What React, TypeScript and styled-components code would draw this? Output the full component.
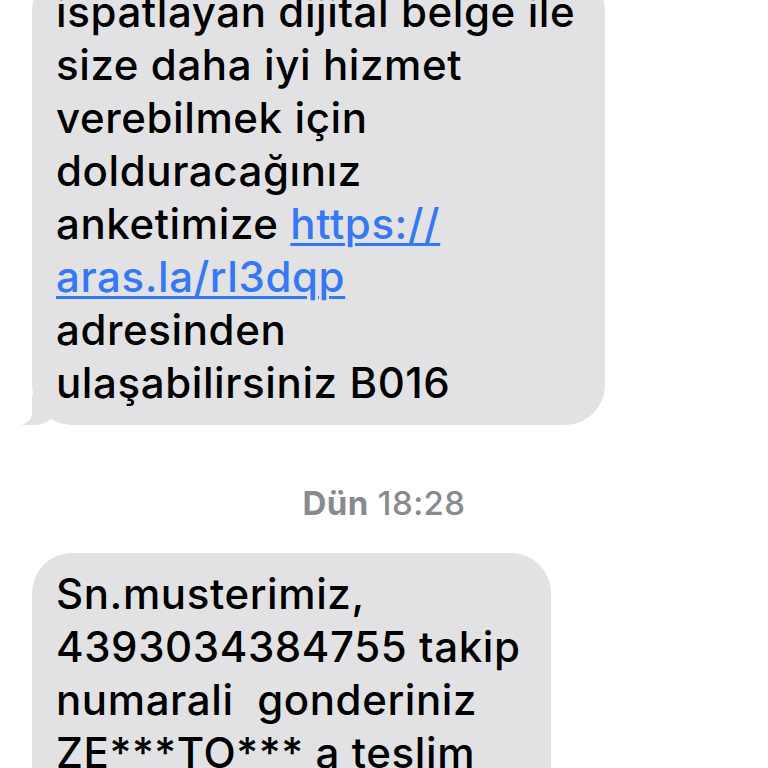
import React from "react";
import styled, { createGlobalStyle } from "styled-components";

const Global = createGlobalStyle`
  html, body { margin: 0; padding: 0; background: #ffffff; }
  body { width: 768px; height: 768px; overflow: hidden; }
  #root { width: 768px; height: 768px; overflow: hidden; }
`;

const Thread = styled.div`
  display: flex;
  flex-direction: column;
  align-items: flex-start;
  padding: 0 32px;
  font-family: Inter, "Noto Sans", "Liberation Sans", sans-serif;
`;

const Bubble = styled.div<{ $tail?: boolean; $offset?: number }>`
  position: relative;
  background: #e2e2e4;
  color: #000000;
  border-radius: 40px;
  padding: 14px 30px 16px 24px;
  font-size: 42px;
  font-weight: 500;
  line-height: 53px;
  letter-spacing: 0.6px;
  margin-top: ${(p) => p.$offset ?? 0}px;
  ${(p) =>
    p.$tail &&
    `
    &::before {
      content: "";
      position: absolute;
      left: -10px;
      bottom: 0;
      width: 34px;
      height: 30px;
      background: #e2e2e4;
      border-bottom-right-radius: 22px 16px;
    }
    &::after {
      content: "";
      position: absolute;
      left: -26px;
      bottom: 0;
      width: 26px;
      height: 30px;
      background: #ffffff;
      border-bottom-right-radius: 14px 12px;
    }
  `}
`;

const Line = styled.span`
  display: block;
  white-space: nowrap;
  position: relative;
  z-index: 1;
`;

const Link = styled.span`
  color: #3478f6;
  text-decoration: underline;
  text-decoration-thickness: 3px;
  text-underline-offset: 4px;
`;

const Stamp = styled.div`
  align-self: center;
  margin: 58px 0 30px;
  color: #8a8a8e;
  font-size: 33px;
  line-height: 40px;
  font-weight: 500;
  letter-spacing: 0.4px;
  b { font-weight: 700; }
`;

export default function App() {
  return (
    <>
      <Global />
      <Thread>
        <Bubble $tail $offset={-29}>
          <Line>ispatlayan dijital belge ile</Line>
          <Line>size daha iyi hizmet</Line>
          <Line>verebilmek için</Line>
          <Line>dolduracağınız</Line>
          <Line>
            anketimize <Link>https://</Link>
          </Line>
          <Line>
            <Link>aras.la/rl3dqp</Link>
          </Line>
          <Line>adresinden</Line>
          <Line>ulaşabilirsiniz B016</Line>
        </Bubble>
        <Stamp>
          <b>Dün</b> 18:28
        </Stamp>
        <Bubble>
          <Line>Sn.musterimiz,</Line>
          <Line>4393034384755 takip</Line>
          <Line>numarali&nbsp; gonderiniz</Line>
          <Line>ZE***TO*** a teslim</Line>
          <Line>edilmistir.</Line>
        </Bubble>
      </Thread>
    </>
  );
}
